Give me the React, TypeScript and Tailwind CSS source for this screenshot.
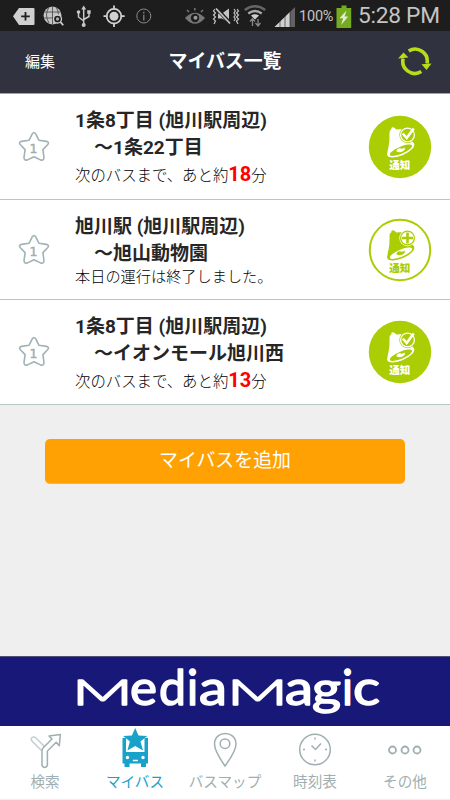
import React from "react";

const jp = "font-[Roboto,'Noto_Sans_CJK_JP',sans-serif]";

function StatusBar() {
  return (
    <div className="flex h-[31px] shrink-0 items-center bg-[#1d1d1d] text-[#c4c4c4]">
      <svg width="310" height="31" viewBox="0 0 310 31" fill="none">
        <path d="M13 16.3 19 8H33.5Q34.500 8 34.500 9V24Q34.500 25 33.500 25H19Z" fill="#d0d0d0" />
        <path d="M25.500 12v8.500M21.200 16.300h8.600" stroke="#1d1d1d" strokeWidth="1.800" />
        <circle cx="52.500" cy="15.500" r="9" fill="#c4c4c4" />
        <path d="M44 12h17M44 18h17M52.500 6v18M49 7q-5 8 0 16M56 7q5 8 0 16" stroke="#444" strokeWidth="0.800" />
        <circle cx="57.500" cy="19" r="4" fill="#1d1d1d" stroke="#d0d0d0" strokeWidth="1.300" />
        <circle cx="57.500" cy="19" r="1.700" fill="#aaa" />
        <path d="m60.500 22 2.700 3.300" stroke="#d0d0d0" strokeWidth="1.800" />
        <g stroke="#c8c8c8" strokeWidth="1.500">
          <path d="M83.700 8v17M78.500 12v5l5.200 4M89 12v4.500l-5.300 3" />
          <circle cx="83.700" cy="25" r="2" fill="#c8c8c8" stroke="none" />
          <circle cx="78.500" cy="12" r="1.800" fill="#c8c8c8" stroke="none" />
          <path d="M87.200 10.200h3.500v3.500h-3.500zM81.200 9.500l2.500-4 2.500 4z" fill="#c8c8c8" stroke="none" />
        </g>
        <g stroke="#d0d0d0">
          <circle cx="114" cy="16.200" r="7.300" strokeWidth="1.800" />
          <circle cx="114" cy="16.200" r="4.500" fill="#d0d0d0" stroke="none" />
          <path d="M114 5.500v4M114 23v4M103.500 16.200h4M120.700 16.200h4" strokeWidth="1.800" />
        </g>
        <circle cx="143.800" cy="16" r="7" stroke="#8b8b8b" strokeWidth="1" />
        <path d="M143.800 11.800v1.800M143.800 14.800v5.800" stroke="#8b8b8b" strokeWidth="1.200" />
        <g stroke="#777" strokeWidth="1.500">
          <path d="M186 18q9-9 18 0-9 10-18 0z" fill="#777" />
          <path d="M189 12l-2-2M194.800 10.500V8M201 12l2-2" />
          <circle cx="195" cy="18" r="4.200" fill="#1d1d1d" stroke="none" />
          <circle cx="195.500" cy="17.800" r="2" fill="#999" stroke="none" />
        </g>
        <path d="M215 9l-1.500 2 2 2-2 2 2 2-2 2 2 2-1.500 3M237 9l1.500 2-2 2 2 2-2 2 2 2-2 2 1.500 3M234 9l1.300 2-1.300 2 1.300 2-1.300 2 1.300 2-1.300 2" stroke="#c4c4c4" strokeWidth="1.200" />
        <path d="M218 13.500h4l7-5v14l-7-4h-4z" fill="#c4c4c4" />
        <path d="m216 8 14.500 15.500" stroke="#1d1d1d" strokeWidth="3.600" />
        <path d="m216 8.500 14 15" stroke="#c4c4c4" strokeWidth="1.800" />
        <g stroke="#666" strokeWidth="2.400">
          <path d="M244.800 10q10.200-7.500 20.400 0" />
          <path d="M248.300 13.500q6.700-4.800 13.400 0" stroke="#aaa" />
        </g>
        <path d="M251 15.500q4-2.500 8 0l-4 4z" fill="#d0d0d0" />
        <path d="M252.500 26v-7M250 21.500l2.500-3 2.500 3M258 19v7M255.500 23l2.500 3 2.500-3" stroke="#888" strokeWidth="1.300" />
        <path d="M274.500 27 295 7v20z" fill="#626262" />
        <path d="M274.500 27 290 12v15z" fill="#d0d0d0" />
        <path d="M280 20v7M285 15v12M290 10v17" stroke="#1d1d1d" strokeWidth="0.600" />
      </svg>
      <span className="-ml-[11px] mt-[3px] w-[37px] whitespace-nowrap font-[Roboto] text-[14.500px] tracking-[-0.200px]">100%</span>
      <svg className="shrink-0" width="16" height="31" viewBox="0 0 16 31">
        <path d="M.500 8h5V5.500h5V8h4.700v20H.500z" fill="#74ab1f" />
        <path d="M10.500 10.500 3.500 18.300h3.700L5 25l7.200-8.400H8.600z" fill="#e4ebd9" />
      </svg>
      <span className="ml-[6px] mt-[2px] whitespace-nowrap font-[Roboto] text-[22.700px] tracking-[-0.250px]">5:28 PM</span>
    </div>
  );
}

function Star() {
  return (
    <svg className="ml-[18px] mr-[25px] shrink-0" width="32" height="32" viewBox="0 0 32 32">
      <path d="M14.400 2.700Q16 .300 17.600 2.700L21 9.300 28.500 10.400Q31.800 11.200 29.600 13.800L24.900 18.600 26 26.500Q25.900 30 22.500 28.900L16 25.800 9.500 28.900Q6.100 30 6 26.500L7.100 18.600 2.400 13.800Q.200 11.200 3.500 10.400L11 9.300Z" fill="none" stroke="#a1b2b5" strokeWidth="1.600" strokeLinejoin="round" />
      <text x="15.600" y="21.500" textAnchor="middle" fontFamily="DejaVu Sans" fontSize="12.500" fill="#9eafb1" stroke="#9eafb1" strokeWidth="0.500">1</text>
    </svg>
  );
}

function Notice({ active }: { active: boolean }) {
  const ink = active ? "#fff" : "#abcd03";
  const ground = active ? "#abcd03" : "#fff";
  return (
    <svg className="ml-auto mr-[18px] shrink-0" width="64" height="64" viewBox="0 0 64 64">
      <circle cx="32" cy="32" r={active ? 31.2 : 30.2} fill={ground} stroke="#abcd03" strokeWidth={active ? 0 : 2} />
      <path d="M21.500 18Q21.300 15.200 23.200 14.500Q23 11.500 26 12.500L28.500 14.500 34 14L42 22 45.800 29 33 33 20 38.500Q19 36 20.500 32Q21.800 26 21.500 18Z" fill={ink} />
      <ellipse cx="32.700" cy="34.500" rx="14.600" ry="6" transform="rotate(-23 32.700 34.500)" fill={ink} />
      <ellipse cx="33" cy="35.200" rx="12" ry="3.500" transform="rotate(-23 33 35.200)" fill={ground} />
      <path d="M28.500 36.500q0-3 3-3.200 4 1 5-.800 1.500 2-2 4-3 1.500-6 0z" fill={ink} />
      <circle cx="39.500" cy="20" r="8.200" fill={ground} />
      <circle cx="39.500" cy="20" r="6.900" fill={ground} stroke={ink} strokeWidth="1.300" />
      {active ? (
        <path d="m34.700 18.500 4 4.500 7-9.500" fill="none" stroke={ink} strokeWidth="2.600" />
      ) : (
        <path d="M39.500 14.500v11M34 20h11" stroke={ink} strokeWidth="2.600" />
      )}
      <text x="31.700" y="54" textAnchor="middle" fontFamily="Noto Sans CJK JP, sans-serif" fontWeight="900" fontSize="10.500" fill={ink}>通知</text>
    </svg>
  );
}

type Route = { from: string; to: string; minutes?: string };

function RouteRow({ route, height }: { route: Route; height: string }) {
  return (
    <div className={`flex shrink-0 items-center border-b border-[#bac7c7] bg-white ${height}`}>
      <Star />
      <div className="self-start whitespace-nowrap pt-[13px]">
        <div className="text-[19px] font-bold leading-[27px] text-[#262626]">{route.from}</div>
        <div className="text-[19px] font-bold leading-[27px] text-[#262626]">{"\u3000" + "〜" + route.to}</div>
        {route.minutes ? (
          <div className="text-[15.400px] font-light leading-[27px] text-black">
            次のバスまで、あと約<b className="text-[20px] font-bold text-[#ff0000]">{route.minutes}</b>分
          </div>
        ) : (
          <div className="text-[15.200px] font-light leading-[20px] text-black">本日の運行は終了しました。</div>
        )}
      </div>
      <Notice active={!!route.minutes} />
    </div>
  );
}

function Logo() {
  const letters: [string, number, number, number][] = [
    ["M", 72, 61, 36],
    ["e", 130, 27, 49],
    ["d", 159, 27, 49],
    ["i", 187, 11, 49],
    ["a", 199, 28, 49],
    ["M", 227, 61, 36],
    ["a", 285, 28, 49],
    ["g", 312, 29, 46],
    ["i", 342, 11, 49],
    ["c", 353, 27, 49],
  ];
  return (
    <svg width="450" height="70" viewBox="0 0 450 70">
      {letters.map(([letter, x, width, size], i) => (
        <text key={i} x={x} y="47.500" fontFamily="Lato" fontWeight={letter === "M" ? 300 : 400} fontSize={size} textLength={width} lengthAdjust="spacingAndGlyphs" fill="#fff" stroke="#fff" strokeWidth="1.500" strokeLinejoin="round">{letter}</text>
      ))}
    </svg>
  );
}

function Tab({ label, active, children }: { label: string; active?: boolean; children: React.ReactNode }) {
  return (
    <div className={`flex flex-1 flex-col items-center text-[14.600px] font-normal ${active ? "text-[#18a2ca]" : "text-[#9fafb1]"}`}>
      <svg width="44" height="46" viewBox="0 0 44 46" fill="none" stroke="currentColor" strokeWidth="1.500">{children}</svg>
      <span className="whitespace-nowrap leading-[20px]">{label}</span>
    </div>
  );
}

export default function App() {
  return (
    <div className={`flex h-[800px] w-[450px] flex-col overflow-hidden bg-[#efefef] ${jp}`}>
      <StatusBar />
      <header className="grid h-[63px] shrink-0 grid-cols-[75px_1fr_75px] items-center border-b border-[#a1a2aa] bg-[#30323f] text-white">
        <span className="pl-[25px] text-[15px]">編集</span>
        <h1 className="text-center text-[18.900px] font-bold">マイバス一覧</h1>
        <svg className="ml-[21px]" width="36" height="32" viewBox="0 0 36 32" fill="none" stroke="#b8dc16" strokeWidth="3.600">
          <path d="M12.700 5.100A12 12 0 0 1 31 17.500M25.300 25.500A12 12 0 0 1 7.200 12.500" />
          <path d="M2 12.500 7.500 6.500l5 5zM25.500 18.300l10-.800-5 6.500z" fill="#b8dc16" stroke="none" />
        </svg>
      </header>
      <main className="flex flex-1 flex-col">
        <RouteRow height="h-[106px]" route={{ from: "1条8丁目 (旭川駅周辺)", to: "1条22丁目", minutes: "18" }} />
        <RouteRow height="h-[100px]" route={{ from: "旭川駅 (旭川駅周辺)", to: "旭山動物園" }} />
        <RouteRow height="h-[105px]" route={{ from: "1条8丁目 (旭川駅周辺)", to: "イオンモール旭川西", minutes: "13" }} />
        <button className="mx-[45px] mt-[34px] flex h-[45px] items-center justify-center rounded-[5px] border-b border-[#f2b354] bg-[#ffa103] text-[18.900px] font-normal text-white">マイバスを追加</button>
      </main>
      <div className="h-[70px] shrink-0 border-t border-[#50517f] bg-[#181878]"><Logo /></div>
      <nav className="flex h-[74px] shrink-0 border-b border-[#eee] bg-white">
        <Tab label="検索">
          <path d="m18.500 24.500-9.500-9.500Q7.500 12.500 9 11.500T12.500 11.500L21.500 20.500" stroke="#c4cecf" />
          <path d="M19 24v15.500q2.700 4 5.400 0V25l8.800-8.800 3.100 3.500L37.300 8.500 26 10l3 3-9 9Z" strokeLinejoin="round" />
        </Tab>
        <Tab label="マイバス" active>
          <path d="M9.500 12h25.500v25.500h-25.500zM11.500 37h5v4h-5zM28 37h5v4h-5z" fill="currentColor" stroke="none" />
          <path d="M13 11h18.500v15H13z" fill="white" stroke="none" />
          <path d="M22.200 2 25.500 9.500l8.700.600-6.700 5.500 2.500 9-7.800-4.600-7.800 4.600 2.500-9-6.700-5.500 8.700-.600z" fill="currentColor" stroke="none" />
          <circle cx="14.500" cy="31.500" r="1.700" fill="white" stroke="none" /><circle cx="30" cy="31.500" r="1.700" fill="white" stroke="none" />
          <path d="M19.800 34.500h5" stroke="white" />
        </Tab>
        <Tab label="バスマップ">
          <path d="M22 40Q11.500 25 11.500 18C11.500 4 33 4 33 18Q33 25 22 40Z" /><circle cx="22" cy="17.700" r="4.800" />
        </Tab>
        <Tab label="時刻表">
          <circle cx="22" cy="23.500" r="15.300" />
          <path d="M22 11.500v2M22 33.500v2M10 23.500h2M32 23.500h2M18.500 19.500l4 4 5.500-6" />
        </Tab>
        <Tab label="その他">
          <circle cx="9.500" cy="24" r="3.500" strokeWidth="1.800" /><circle cx="22" cy="24" r="3.500" strokeWidth="1.800" /><circle cx="34" cy="24" r="3.500" strokeWidth="1.800" />
        </Tab>
      </nav>
    </div>
  );
}
